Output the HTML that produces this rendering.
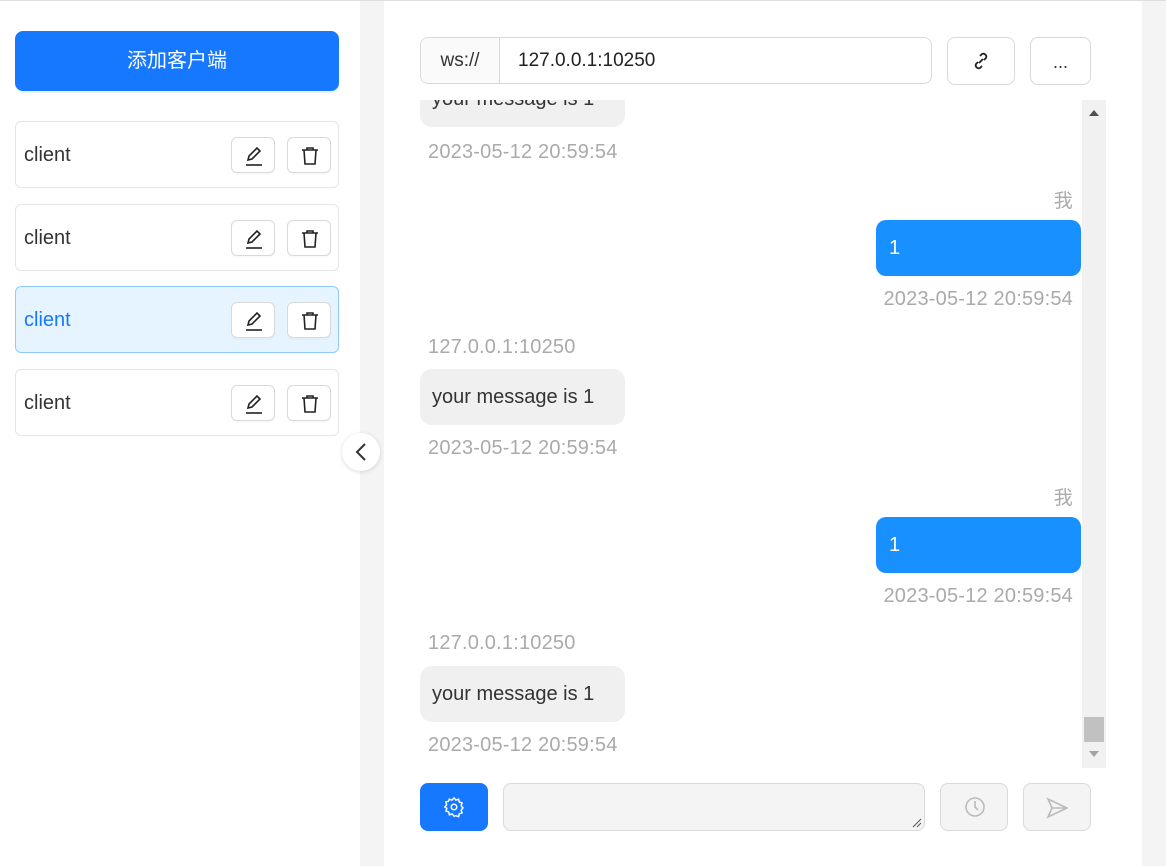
<!DOCTYPE html>
<html><head><meta charset="utf-8"><style>
*{box-sizing:border-box;margin:0;padding:0}
body{width:1166px;height:866px;background:#f4f4f4;font-family:"Liberation Sans","Noto Sans CJK SC",sans-serif;position:relative;overflow:hidden}
.a{position:absolute}
.line{left:0;top:0;width:1166px;height:1px;background:#ddd}
.left{left:0;top:1px;width:360px;height:865px;background:#fff}
.main{left:384px;top:1px;width:758px;height:865px;background:#fff}
.add{left:15px;top:31px;width:324px;height:60px;background:#1677ff;border-radius:8px;color:#fff;font-size:20px;text-align:center;line-height:60px;box-shadow:0 2px 0 rgba(5,145,255,.1)}
.item{left:15px;width:324px;height:67px;border:1px solid #e5e5e5;border-radius:6px;background:#fff}
.item span{position:absolute;left:8px;top:22px;font-size:20px;color:#333}
.item.sel{background:#e6f4ff;border-color:#91caff}
.item.sel span{color:#1677ff}
.ib{position:absolute;top:15px;width:44px;height:36px;border:1px solid #d9d9d9;border-radius:6px;background:#fff;box-shadow:0 2px 0 rgba(0,0,0,.02)}
.ib svg{position:absolute;left:11px;top:7px}
.toggle{left:342px;top:433px;width:38px;height:38px;border-radius:50%;background:#fff;box-shadow:0 1px 4px rgba(0,0,0,.15)}
.url{left:420px;top:37px;width:512px;height:47px;border:1px solid #d9d9d9;border-radius:8px;overflow:hidden}
.pre{position:absolute;left:0;top:0;width:79px;height:45px;background:#fafafa;border-right:1px solid #d9d9d9;font-size:19px;color:#333;line-height:45px;text-align:center}
.url .v{position:absolute;left:97px;top:0;line-height:45px;font-size:19px;color:#222}
.btn{top:37px;width:68px;height:48px;border:1px solid #d9d9d9;border-radius:8px;background:#fff;text-align:center;line-height:44px;font-size:18px;color:#333}
.msgs{left:420px;top:100px;width:686px;height:668px;overflow:hidden}
.sb{right:0;top:0;width:24px;height:668px;background:#f1f1f1}
.bl{left:0;height:56px;background:#f0f0f0;border-radius:12px;font-size:20px;color:#333;line-height:56px;padding:0 12px;width:205px}
.br{left:456px;width:205px;height:56px;background:#1890ff;border-radius:10px;color:#fff;font-size:20px;line-height:56px;padding-left:13px}
.t{font-size:20px;color:#aaa;letter-spacing:0.2px}
.tl{left:8px}.tr{right:33px}
.gear{left:420px;top:783px;width:68px;height:48px;background:#1677ff;border-radius:8px}
.ta{left:503px;top:783px;width:422px;height:48px;background:#f4f4f4;border:1px solid #d9d9d9;border-radius:8px}
.db{top:783px;width:68px;height:48px;background:#f4f4f4;border:1px solid #d9d9d9;border-radius:8px}
</style></head><body>
<div class="a line"></div>
<div class="a left"></div>
<div class="a main"></div>
<div class="a add">添加客户端</div>

<div class="a item" style="top:121px"><span>client</span>
<div class="ib" style="left:215px"><svg width="22" height="22" viewBox="0 0 22 22" fill="none" stroke="#222" stroke-width="1.6"><path d="M5 15l1-4 8-8 3 3-8 8z"/><path d="M3 20h16"/></svg></div>
<div class="ib" style="left:271px"><svg width="22" height="22" viewBox="0 0 22 22" fill="none" stroke="#222" stroke-width="1.6"><path d="M3 5h16M8 5V3h6v2M5 5l1 14h10l1-14"/></svg></div></div>
<div class="a item" style="top:204px"><span>client</span>
<div class="ib" style="left:215px"><svg width="22" height="22" viewBox="0 0 22 22" fill="none" stroke="#222" stroke-width="1.6"><path d="M5 15l1-4 8-8 3 3-8 8z"/><path d="M3 20h16"/></svg></div>
<div class="ib" style="left:271px"><svg width="22" height="22" viewBox="0 0 22 22" fill="none" stroke="#222" stroke-width="1.6"><path d="M3 5h16M8 5V3h6v2M5 5l1 14h10l1-14"/></svg></div></div>
<div class="a item sel" style="top:286px"><span>client</span>
<div class="ib" style="left:215px"><svg width="22" height="22" viewBox="0 0 22 22" fill="none" stroke="#222" stroke-width="1.6"><path d="M5 15l1-4 8-8 3 3-8 8z"/><path d="M3 20h16"/></svg></div>
<div class="ib" style="left:271px"><svg width="22" height="22" viewBox="0 0 22 22" fill="none" stroke="#222" stroke-width="1.6"><path d="M3 5h16M8 5V3h6v2M5 5l1 14h10l1-14"/></svg></div></div>
<div class="a item" style="top:369px"><span>client</span>
<div class="ib" style="left:215px"><svg width="22" height="22" viewBox="0 0 22 22" fill="none" stroke="#222" stroke-width="1.6"><path d="M5 15l1-4 8-8 3 3-8 8z"/><path d="M3 20h16"/></svg></div>
<div class="ib" style="left:271px"><svg width="22" height="22" viewBox="0 0 22 22" fill="none" stroke="#222" stroke-width="1.6"><path d="M3 5h16M8 5V3h6v2M5 5l1 14h10l1-14"/></svg></div></div>

<div class="a toggle"><svg width="38" height="38" viewBox="0 0 38 38" fill="none" stroke="#333" stroke-width="2"><path d="M23 11l-8 8 8 8"/></svg></div>

<div class="a url"><div class="pre">ws://</div><div class="v">127.0.0.1:10250</div></div>
<div class="a btn" style="left:947px"><svg width="22" height="22" viewBox="0 0 22 22" style="margin-top:12px" fill="none" stroke="#222" stroke-width="1.8"><path d="M9 13l4-4M10 6l2-2a3 3 0 014 4l-2 2M12 16l-2 2a3 3 0 01-4-4l2-2"/></svg></div>
<div class="a btn" style="left:1030px;top:37px;width:61px;height:48px;line-height:48px">...</div>

<div class="a msgs">
<div class="a sb"><svg class="a" style="left:7px;top:10px" width="10" height="6"><path d="M0 6L5 0 10 6z" fill="#505050"/></svg><div class="a" style="left:2px;top:617px;width:20px;height:25px;background:#c1c1c1"></div><svg class="a" style="left:7px;top:651px" width="10" height="6"><path d="M0 0L5 6 10 0z" fill="#a3a3a3"/></svg></div>
<div class="a bl" style="top:-29px">your message is 1</div>
<div class="a t tl" style="top:41px">2023-05-12 20:59:54</div>
<div class="a t" style="right:33px;top:86px;font-size:19px">我</div>
<div class="a br" style="top:120px">1</div>
<div class="a t tr" style="top:188px">2023-05-12 20:59:54</div>
<div class="a t tl" style="top:236px">127.0.0.1:10250</div>
<div class="a bl" style="top:269px">your message is 1</div>
<div class="a t tl" style="top:337px">2023-05-12 20:59:54</div>
<div class="a t" style="right:33px;top:383px;font-size:19px">我</div>
<div class="a br" style="top:417px">1</div>
<div class="a t tr" style="top:485px">2023-05-12 20:59:54</div>
<div class="a t tl" style="top:532px">127.0.0.1:10250</div>
<div class="a bl" style="top:566px">your message is 1</div>
<div class="a t tl" style="top:634px">2023-05-12 20:59:54</div>
</div>

<div class="a gear"><svg style="position:absolute;left:23px;top:13px" width="22" height="22" viewBox="0 0 24 24" fill="none" stroke="#fff" stroke-width="1.6"><circle cx="12" cy="12" r="3"/><path d="M12 2l2 2.5 3-1 .8 3.1 3 1-1 3 2 2.4-2 2.4 1 3-3 1-.8 3.1-3-1L12 22l-2-2.5-3 1-.8-3.1-3-1 1-3L2 12l2-2.4-1-3 3-1L6.8 3.5l3 1z"/></svg></div>
<div class="a ta"><svg class="a" style="right:2px;bottom:2px" width="10" height="10" stroke="#555"><path d="M1 9l8-8M5 9l4-4"/></svg></div>
<div class="a db" style="left:940px"><svg style="position:absolute;left:23px;top:12px" width="22" height="22" viewBox="0 0 22 22" fill="none" stroke="#bbb" stroke-width="1.6"><circle cx="11" cy="11" r="9"/><path d="M11 5v6l3 3"/></svg></div>
<div class="a db" style="left:1023px"><svg style="position:absolute;left:22px;top:13px" width="22" height="22" viewBox="0 0 22 22" fill="none" stroke="#bbb" stroke-width="1.6"><path d="M2 2l19 9-19 9 4-9z M6 11h15"/></svg></div>
</body></html>
